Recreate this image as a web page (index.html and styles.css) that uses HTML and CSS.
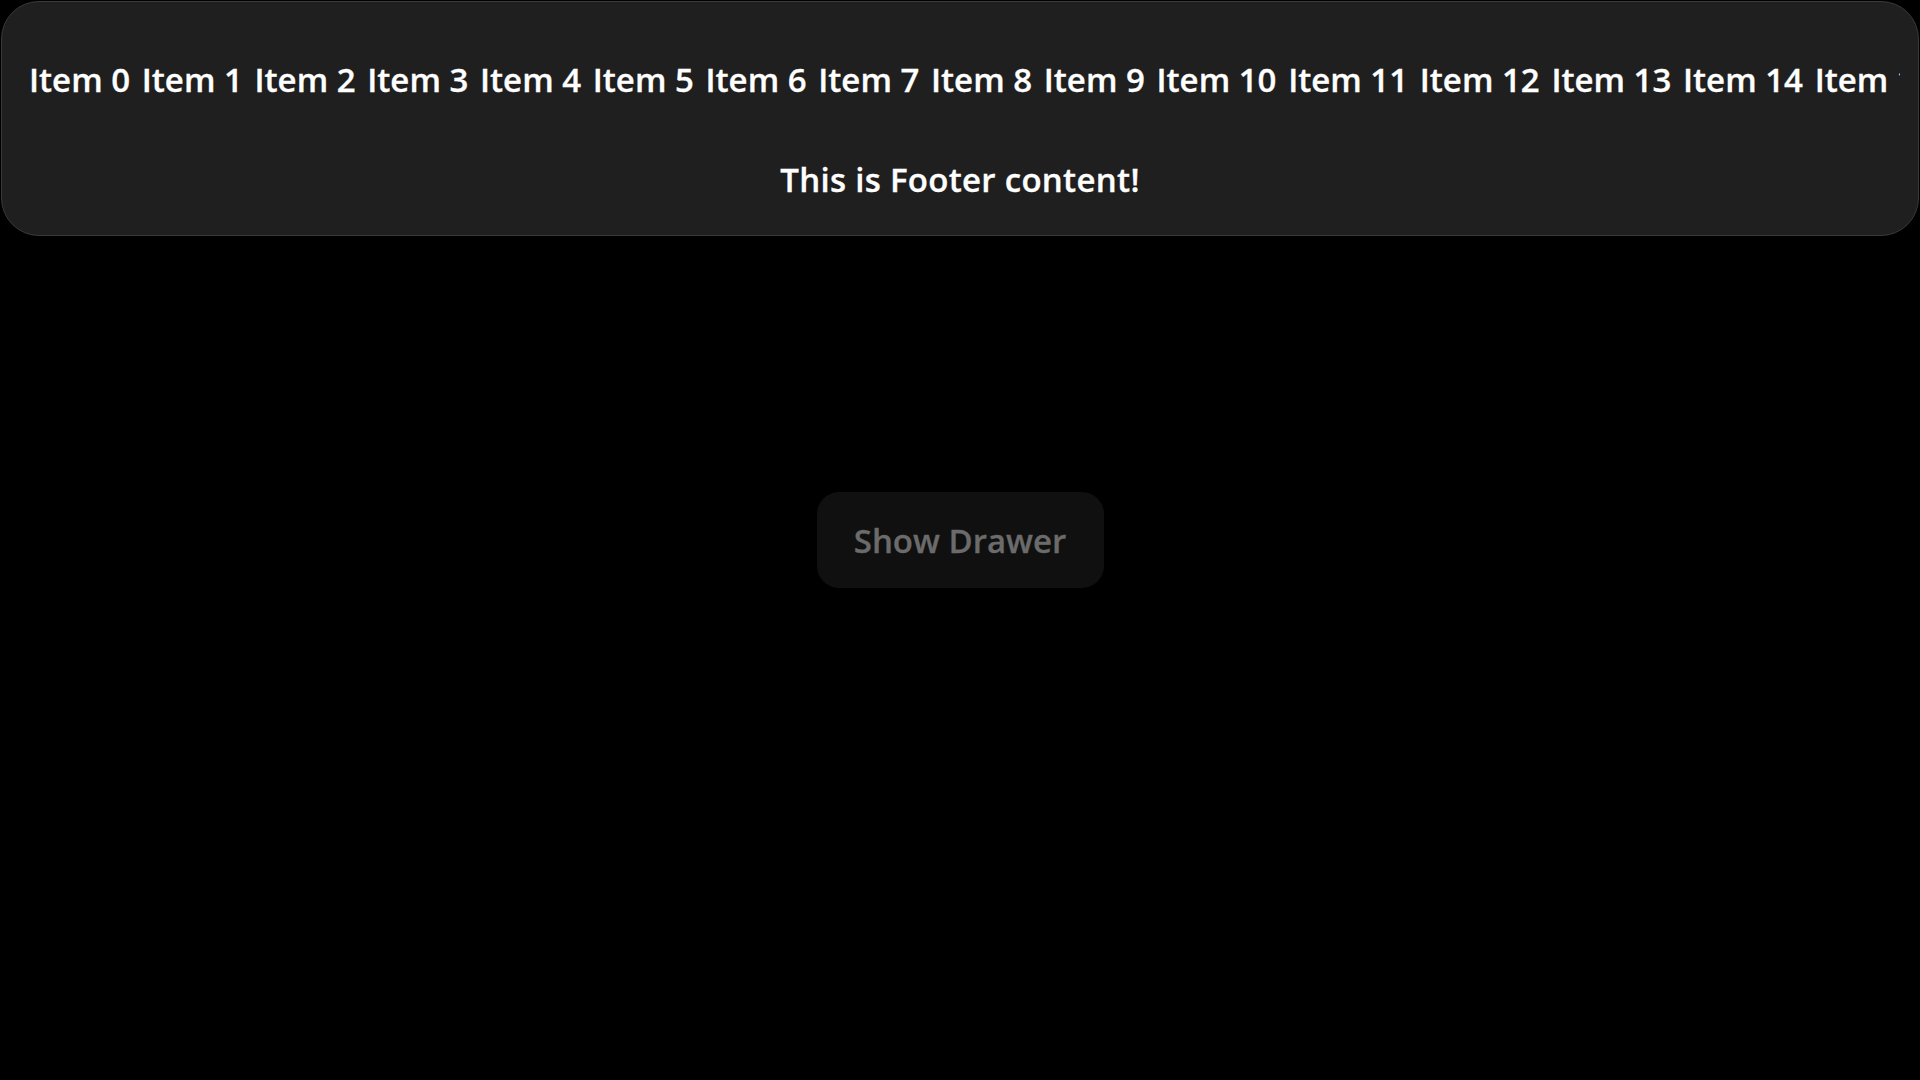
FILE: index.html
```html
<!DOCTYPE html>
<html>
<head>
<meta charset="utf-8">
<link rel="stylesheet" href="styles.css">
</head>
<body>
<main class="page">
  <button class="show-btn">Show Drawer</button>
</main>
<div class="drawer">
  <div class="items">
    <span class="item">Item 0</span>
    <span class="item">Item 1</span>
    <span class="item">Item 2</span>
    <span class="item">Item 3</span>
    <span class="item">Item 4</span>
    <span class="item">Item 5</span>
    <span class="item">Item 6</span>
    <span class="item">Item 7</span>
    <span class="item">Item 8</span>
    <span class="item">Item 9</span>
    <span class="item">Item 10</span>
    <span class="item">Item 11</span>
    <span class="item">Item 12</span>
    <span class="item">Item 13</span>
    <span class="item">Item 14</span>
    <span class="item">Item 15</span>
    <span class="item">Item 16</span>
    <span class="item">Item 17</span>
  </div>
  <div class="footer">This is Footer content!</div>
</div>
</body>
</html>
```
FILE: styles.css
```css
html, body {
  margin: 0;
  padding: 0;
  background: #000;
  font-family: "Open Sans", "Noto Sans", sans-serif;
}
.page {
  height: 100vh;
  display: flex;
  align-items: center;
  justify-content: center;
}
.show-btn {
  width: 287px;
  height: 96px;
  border: none;
  border-radius: 22px;
  background: #101010;
  color: #6b6b6b;
  font-family: "Open Sans", "Noto Sans", sans-serif;
  font-weight: 600;
  font-size: 33px;
  -webkit-text-stroke: 0.3px #6b6b6b;
  padding: 0;
}
.drawer {
  position: absolute;
  top: 1px;
  left: 1px;
  right: 1px;
  height: 235px;
  box-sizing: border-box;
  background: #1f1f1f;
  border: 1px solid #3a3a3a;
  border-radius: 38px;
  display: flex;
  flex-direction: column;
  overflow: hidden;
}
.items {
  display: flex;
  gap: 11.7px;
  white-space: nowrap;
  overflow: hidden;
  margin: 54px 18px 0 27px;
  font-size: 33px;
  font-weight: 600;
  color: #fff;
  -webkit-text-stroke: 0.3px #fff;
  line-height: 48px;
}
.item { flex: none; }
.footer {
  margin-top: 52px;
  text-align: center;
  font-size: 33px;
  font-weight: 600;
  letter-spacing: 0.3px;
  color: #fff;
  -webkit-text-stroke: 0.3px #fff;
  line-height: 48px;
}
```
